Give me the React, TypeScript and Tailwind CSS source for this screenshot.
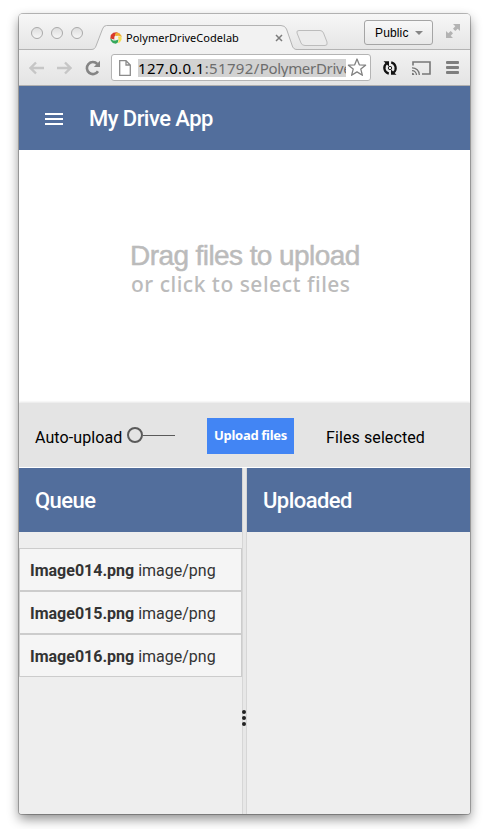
import React from "react";

const files = ["Image014.png", "Image015.png", "Image016.png"];

function PinwheelIcon() {
  return (
    <svg width="12" height="12" viewBox="0 0 12 12" className="shrink-0">
      <path d="M.3 6.500.8 3 3.300.7 6.500.2 8.500 1 6 2.400 4.600 4.200 4.400 7.500Z" fill="#d8392b" />
      <path d="M6 .4 9.500 1.200 11.500 3.700 11.600 5 8.500 3.700 5.800 3.900 4.800 3Z" fill="#efae35" />
      <path d="M8 4.500 11.500 4.700 11.600 7.500 10 10.200 8 11 8.700 8.500Z" fill="#f6df55" />
      <path d="M.3 6 3 8.400 5.600 8.600 8.400 7.500 7.800 10.500 5.800 11.800 2.800 11 .8 8.800Z" fill="#35a85c" />
      <circle cx="6.200" cy="6" r="1.700" fill="#f7f3e8" />
    </svg>
  );
}

function TitleBar() {
  return (
    <div className="flex h-[35px] items-start bg-linear-to-b from-[#f7f7f7] to-[#e5e5e5]">
      <div className="flex shrink-0 gap-2 pt-[13px] pl-3">
        {[0, 1, 2].map((n) => (
          <span
            key={n}
            className="h-3 w-3 rounded-full border border-[#a9a9a9] bg-linear-to-b from-[#dedede] to-[#f6f6f6]"
          />
        ))}
      </div>
      <div className="relative ml-[8px] h-9 w-[206px] shrink-0">
        <svg width="206" height="36" className="absolute top-0 left-0">
          <path
            d="M0 35.500C3 35.500 4 34.500 5 32L11.500 15Q12.500 11.500 15.500 11.500H190Q194 11.500 195.500 15L201 31Q202 35.500 206 35.500V36H0Z"
            fill="#f2f2f2"
          />
          <path
            d="M0 35.500C3 35.500 4 34.500 5 32L11.500 15Q12.500 11.500 15.500 11.500H190Q194 11.500 195.500 15L201 31Q202 35.500 206 35.500"
            fill="none"
            stroke="#b3b3b3"
          />
        </svg>
        <div className="relative flex items-center pt-4 pl-[19px]">
          <PinwheelIcon />
          <span className="ml-1 w-[149px] font-['Noto_Sans',sans-serif] text-[11px] leading-4 tracking-[0.03px] whitespace-nowrap text-black">
            PolymerDriveCodelab
          </span>
          <svg width="8" height="8" viewBox="0 0 8 8" className="shrink-0">
            <path d="M1 1 7 7M7 1 1 7" stroke="#7c7c7c" strokeWidth="1.500" />
          </svg>
        </div>
      </div>
      <svg width="34" height="20" viewBox="0 0 34 20" className="mt-[14px] -ml-[2px] shrink-0">
        <path
          d="M4 2.500H25Q27.500 2.500 28.500 5L32 14Q33 17.500 30 17.500H10Q7 17.500 6 15L2 5Q1.200 2.500 4 2.500Z"
          fill="#ececec"
          stroke="#bcbcbc"
        />
      </svg>
      <div className="mt-[6px] ml-[35px] flex h-[25px] w-[69px] shrink-0 items-center rounded-[3px] border border-[#a5a5a5] bg-linear-to-b from-[#f8f8f8] to-[#e8e8e8] pl-[10px]">
        <span className="w-[40px] font-['Liberation_Sans',sans-serif] text-[12px] leading-4 tracking-[0.15px] text-black">
          Public
        </span>
        <span className="h-0 w-0 border-x-4 border-t-4 border-x-transparent border-t-[#858585]" />
      </div>
      <svg width="14" height="14" viewBox="0 0 14 14" className="mt-[10px] ml-[13px] shrink-0" fill="#b3b3b3">
        <path d="M7 0H14V7L11.700 4.700 9.300 7 7 4.700 9.300 2.300Z" />
        <path d="M0 7 2.300 9.300 4.700 7 7 9.300 4.700 11.700 7 14H0Z" />
      </svg>
    </div>
  );
}

function Toolbar() {
  return (
    <div className="flex h-[37px] items-center border-t border-b border-t-[#b3b3b3] border-b-[#b0b0b0] bg-linear-to-b from-[#f2f2f2] to-[#e4e4e4]">
      <svg width="15" height="14" viewBox="0 0 15 14" className="ml-[10px] shrink-0">
        <path d="M7 1.500 1.500 7 7 12.500M2 7H15" fill="none" stroke="#c6c6c6" strokeWidth="2.400" />
      </svg>
      <svg width="15" height="14" viewBox="0 0 15 14" className="ml-[13px] shrink-0">
        <path d="M8 1.500 13.500 7 8 12.500M13 7H0" fill="none" stroke="#c6c6c6" strokeWidth="2.400" />
      </svg>
      <svg width="16" height="16" viewBox="0 0 16 16" className="ml-[13px] shrink-0">
        <path d="M13 11.200A6 6 0 1 1 12.300 4" fill="none" stroke="#858585" strokeWidth="2.600" />
        <path d="M15 .8V7H8.800Z" fill="#858585" />
      </svg>
      <div className="ml-[10px] flex h-[27px] w-[260px] shrink-0 items-center rounded-[3px] border border-[#b4b4b4] bg-white">
        <svg width="12" height="16" viewBox="0 0 12 16" className="ml-[7px] shrink-0">
          <path d="M.7.700H7L11.300 5V15.300H.7ZM7 .7V5H11.300" fill="#fff" stroke="#8b8b8b" strokeWidth="1.300" />
        </svg>
        <div className="ml-[7px] h-[18px] w-[208px] shrink-0 overflow-hidden bg-[#d2d2d2] font-['Noto_Sans',sans-serif] text-[15px] leading-[18px] tracking-[0.35px] whitespace-nowrap text-[#6d6d6d]">
          <span className="text-black">127.0.0.1</span>:51792/
          <span className="tracking-[-0.3px]">PolymerDrive</span>
        </div>
        <svg width="20" height="19" viewBox="0 0 20 19" className="ml-[1px] shrink-0">
          <path
            d="M10 1 12.300 6.800 18.600 7.200 13.800 11.100 15.400 17.300 10 13.900 4.600 17.300 6.200 11.100 1.400 7.200 7.700 6.800Z"
            fill="#fff"
            stroke="#818181"
            strokeWidth="1.300"
            strokeLinejoin="round"
          />
        </svg>
      </div>
      <svg width="16" height="16" viewBox="0 0 16 16" className="ml-[11px] shrink-0">
        <path d="M6.800 13.600A5.800 5.800 0 0 1 4.400 3.500M9.200 2.400A5.800 5.800 0 0 1 11.600 12.500" fill="none" stroke="#111" strokeWidth="2.200" />
        <path d="M1.500 1.200H7V6.500ZM14.500 14.800H9V9.500Z" fill="#111" />
        <circle cx="8" cy="8" r="1.700" fill="none" stroke="#222" />
      </svg>
      <svg width="19" height="16" viewBox="0 0 19 16" className="ml-[14px] shrink-0" fill="none" stroke="#777" strokeWidth="1.600">
        <path d="M1 5.500V2H18V14H10" />
        <path d="M0 7.800A7 7 0 0 1 7.300 15M0 10.700A4.300 4.300 0 0 1 4.500 15" strokeWidth="1.300" />
        <path d="M0 12.700A2.300 2.300 0 0 1 2.300 15H0Z" fill="#777" stroke="none" />
      </svg>
      <div className="ml-[15px] flex flex-col gap-[2px]">
        {[0, 1, 2].map((n) => (
          <span key={n} className="h-[3px] w-[13px] rounded-[1px] bg-[#7e7e7e]" />
        ))}
      </div>
    </div>
  );
}

function AppHeader() {
  return (
    <header className="flex h-16 items-center bg-[#526e9c] pl-[26px]">
      <div className="flex flex-col gap-[3px] pt-[2px]">
        <span className="h-[2px] w-[18px] bg-white" />
        <span className="h-[2px] w-[18px] bg-white" />
        <span className="h-[2px] w-[18px] bg-white" />
      </div>
      <h1 className="ml-[26px] pt-[2px] text-[22px] leading-7 font-medium tracking-[-0.55px] whitespace-nowrap text-white">
        My Drive App
      </h1>
    </header>
  );
}

function DropZone() {
  return (
    <div className="h-[253px] bg-white pt-[90px] whitespace-nowrap text-[#bbb]">
      <div className="ml-[111px] font-['Liberation_Sans',sans-serif] text-[28px] leading-8 tracking-[-0.58px] [-webkit-text-stroke:0.5px_#bbb]">
        Drag files to upload
      </div>
      <div className="ml-[112px] font-['Noto_Sans',sans-serif] text-[21px] leading-6 font-medium tracking-[0.5px]">
        or click to select files
      </div>
    </div>
  );
}

function ActionBar() {
  return (
    <div className="flex h-[65px] items-start border-b border-b-white bg-[#e4e4e4] pl-4 text-[16px] tracking-[0.1px] whitespace-nowrap text-black shadow-[0_-1px_2px_rgba(0,0,0,0.1)]">
      <span className="w-[92px] pt-[23px] leading-6">Auto-upload</span>
      <div className="mt-6 flex items-center">
        <span className="h-4 w-4 rounded-full border-2 border-[#5a5a5a]" />
        <span className="h-px w-8 bg-[#5a5a5a]" />
      </div>
      <button className="mt-[15px] ml-8 h-9 w-[87px] shrink-0 bg-[#4285f4] pb-[1px] font-['Noto_Sans',sans-serif] text-[13px] font-bold tracking-[-0.3px] text-white">
        Upload files
      </button>
      <span className="ml-8 pt-[23px] leading-6">Files selected</span>
    </div>
  );
}

function PanelHeader({ title }: { title: string }) {
  return (
    <h2 className="flex h-16 items-center pl-4 bg-[#526e9c] text-[22px] font-medium tracking-[-0.55px] text-white">
      {title}
    </h2>
  );
}

function Splitter() {
  return (
    <div className="flex w-[5px] shrink-0 flex-col items-start gap-[2px] border-x border-[#d6d6d6] bg-[#e7e7e7] pt-[242px]">
      <span className="-ml-[1px] h-1 w-1 shrink-0 rounded-full bg-[#222]" />
      <span className="-ml-[1px] h-1 w-1 shrink-0 rounded-full bg-[#222]" />
      <span className="-ml-[1px] h-1 w-1 shrink-0 rounded-full bg-[#222]" />
    </div>
  );
}

export default function App() {
  return (
    <div className="h-[829px] w-[487px] overflow-hidden bg-white pt-[14px] pl-[19px] font-['Roboto',sans-serif]">
      <div className="h-[800px] w-[451px] rounded-t-[4px] rounded-b-[3px] shadow-[0_0_0_1px_rgba(0,0,0,0.25),0_5px_12px_rgba(0,0,0,0.45)]">
        <div className="flex h-full flex-col overflow-hidden rounded-t-[4px] rounded-b-[3px] bg-[#eee]">
          <TitleBar />
          <Toolbar />
          <AppHeader />
          <DropZone />
          <ActionBar />
          <main className="flex flex-1">
            <section className="w-[223px]">
              <PanelHeader title="Queue" />
              <ul className="pt-4">
                {files.map((name) => (
                  <li
                    key={name}
                    className="h-[43px] border border-[#ccc] bg-[#f5f5f5] pt-[10px] pl-[10px] text-[16px] leading-6 whitespace-nowrap text-[#333]"
                  >
                    <strong className="font-bold">{name}</strong> image/png
                  </li>
                ))}
              </ul>
            </section>
            <Splitter />
            <section className="w-[223px]">
              <PanelHeader title="Uploaded" />
            </section>
          </main>
        </div>
      </div>
    </div>
  );
}
